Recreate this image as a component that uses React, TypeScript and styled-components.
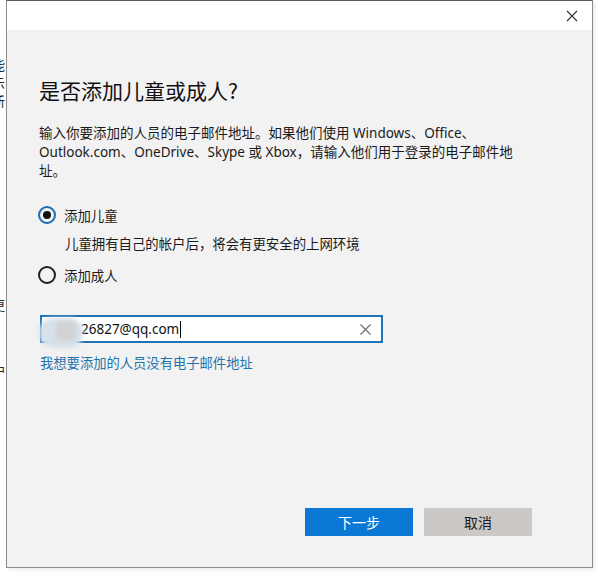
import React from "react";
import styled, { createGlobalStyle } from "styled-components";

const Global = createGlobalStyle`
  html, body { margin: 0; padding: 0; background: #ffffff; }
  body { font-family: "Noto Sans", "Noto Sans CJK SC", sans-serif; }
  #root { width: 600px; height: 574px; overflow: hidden; }
`;

const Page = styled.div`
  width: 600px;
  height: 574px;
  display: flex;
  align-items: flex-start;
  background: #ffffff;
  font-family: "Noto Sans", "Noto Sans CJK SC", sans-serif;
`;

const BackStrip = styled.div`
  width: 6px;
  height: 574px;
  overflow: hidden;
  flex: none;
  display: flex;
  flex-direction: column;
  color: #222;
  font-size: 13px;
  font-family: "Noto Sans CJK SC", sans-serif;
`;

const BackGlyph = styled.span<{ $top: number }>`
  display: block;
  margin-top: ${(p) => p.$top}px;
  margin-left: -8px;
  line-height: 18px;
  height: 18px;
  white-space: nowrap;
`;

const Dialog = styled.div`
  width: 585px;
  height: 566px;
  flex: none;
  border: 1px solid #8c8c8c;
  border-top-color: #5a5a5a;
  display: flex;
  flex-direction: column;
  background: #f2f2f2;
  box-shadow: 2px 2px 4px rgba(0, 0, 0, 0.08);
`;

const TitleBar = styled.div`
  height: 29px;
  background: #ffffff;
  display: flex;
  justify-content: flex-end;
  align-items: center;
  padding-right: 13px;
  flex: none;
`;

const CloseBtn = styled.div`
  width: 14px;
  height: 14px;
  display: flex;
  align-items: center;
  justify-content: center;
`;

const Body = styled.div`
  flex: 1;
  display: flex;
  flex-direction: column;
  padding: 46px 0 0 32px;
  color: #000;
`;

const Title = styled.h1`
  margin: 0;
  font-family: "Noto Sans CJK SC", sans-serif;
  font-size: 21px;
  font-weight: 400;
  line-height: 28px;
  color: #111;
`;

const Para = styled.p`
  margin: 20px 0 0 0;
  font-size: 13.5px;
  line-height: 19px;
  color: #1a1a1a;
  white-space: nowrap;
`;

const RadioGroup = styled.div`
  margin-top: 24px;
  display: flex;
  flex-direction: column;
`;

const RadioRow = styled.label`
  display: flex;
  align-items: center;
  gap: 8px;
  height: 20px;
  font-size: 13.4px;
  color: #1a1a1a;
`;

const RadioCircle = styled.span<{ $checked?: boolean }>`
  width: 18px;
  height: 18px;
  box-sizing: border-box;
  border-radius: 50%;
  border: 2px solid ${(p) => (p.$checked ? "#1b6cb3" : "#1f1f1f")};
  display: flex;
  align-items: center;
  justify-content: center;
  flex: none;
  margin-left: -1px;

  &::after {
    content: "";
    display: ${(p) => (p.$checked ? "block" : "none")};
    width: 8px;
    height: 8px;
    border-radius: 50%;
    background: #111;
  }
`;

const RadioHint = styled.div`
  margin: 9px 0 11px 26px;
  font-size: 13.4px;
  line-height: 20px;
  color: #1a1a1a;
`;

const InputWrap = styled.div`
  position: relative;
  margin-top: 30px;
  margin-left: 1px;
  width: 343px;
  height: 28px;
  box-sizing: border-box;
  border: 2px solid #1f74b8;
  background: #ffffff;
  display: flex;
  align-items: center;
  padding: 0 10px 0 39px;
`;

const InputText = styled.span`
  font-family: "Noto Sans", sans-serif;
  font-size: 13.5px;
  color: #111;
  flex: 1;
  display: flex;
  align-items: center;
`;

const Caret = styled.span`
  display: inline-block;
  width: 1px;
  height: 17px;
  background: #000;
  margin-left: 1px;
`;

const Smudge = styled.div`
  position: absolute;
  left: -3px;
  top: 1px;
  width: 44px;
  height: 30px;
  border-radius: 14px;
  background: #d7e1ea;
  filter: blur(2px);

  &::after {
    content: "";
    position: absolute;
    left: 17px;
    top: 3px;
    width: 20px;
    height: 20px;
    background: #d2d2d2;
    border-radius: 4px;
  }
`;

const ClearBtn = styled.span`
  width: 12px;
  height: 12px;
  display: flex;
  align-items: center;
  justify-content: center;
`;

const Link = styled.a`
  margin-top: 11px;
  margin-left: 1px;
  font-size: 13.3px;
  line-height: 19px;
  color: #1f73ad;
  text-decoration: none;
`;

const Footer = styled.div`
  margin-top: auto;
  display: flex;
  gap: 11px;
  padding: 0 0 31px 266px;
`;

const Button = styled.button<{ $primary?: boolean }>`
  width: 108px;
  height: 28px;
  border: none;
  padding: 0;
  font-family: "Noto Sans CJK SC", sans-serif;
  font-size: 14px;
  color: ${(p) => (p.$primary ? "#ffffff" : "#1a1a1a")};
  background: ${(p) => (p.$primary ? "#0a78d4" : "#cbc8c6")};
`;

export default function App() {
  return (
    <>
      <Global />
      <Page>
        <BackStrip>
          <BackGlyph $top={56}>能</BackGlyph>
          <BackGlyph $top={0}>示</BackGlyph>
          <BackGlyph $top={0}>新</BackGlyph>
          <BackGlyph $top={186}>更</BackGlyph>
          <BackGlyph $top={47}>中</BackGlyph>
        </BackStrip>
        <Dialog>
          <TitleBar>
            <CloseBtn>
              <svg width="12" height="12" viewBox="0 0 12 12">
                <path d="M1 1 L11 11 M11 1 L1 11" stroke="#333" strokeWidth="1.1" fill="none" />
              </svg>
            </CloseBtn>
          </TitleBar>
          <Body>
            <Title>是否添加儿童或成人?</Title>
            <Para>
              输入你要添加的人员的电子邮件地址。如果他们使用 Windows、Office、
              <br />
              Outlook.com、OneDrive、Skype 或 Xbox，请输入他们用于登录的电子邮件地
              <br />
              址。
            </Para>
            <RadioGroup>
              <RadioRow>
                <RadioCircle $checked />
                添加儿童
              </RadioRow>
              <RadioHint>儿童拥有自己的帐户后，将会有更安全的上网环境</RadioHint>
              <RadioRow>
                <RadioCircle />
                添加成人
              </RadioRow>
            </RadioGroup>
            <InputWrap>
              <Smudge />
              <InputText>
                26827@qq.com
                <Caret />
              </InputText>
              <ClearBtn>
                <svg width="11" height="11" viewBox="0 0 11 11">
                  <path d="M0.5 0.5 L10.5 10.5 M10.5 0.5 L0.5 10.5" stroke="#6a6a6a" strokeWidth="1.1" fill="none" />
                </svg>
              </ClearBtn>
            </InputWrap>
            <Link href="#">我想要添加的人员没有电子邮件地址</Link>
            <Footer>
              <Button $primary>下一步</Button>
              <Button>取消</Button>
            </Footer>
          </Body>
        </Dialog>
      </Page>
    </>
  );
}
